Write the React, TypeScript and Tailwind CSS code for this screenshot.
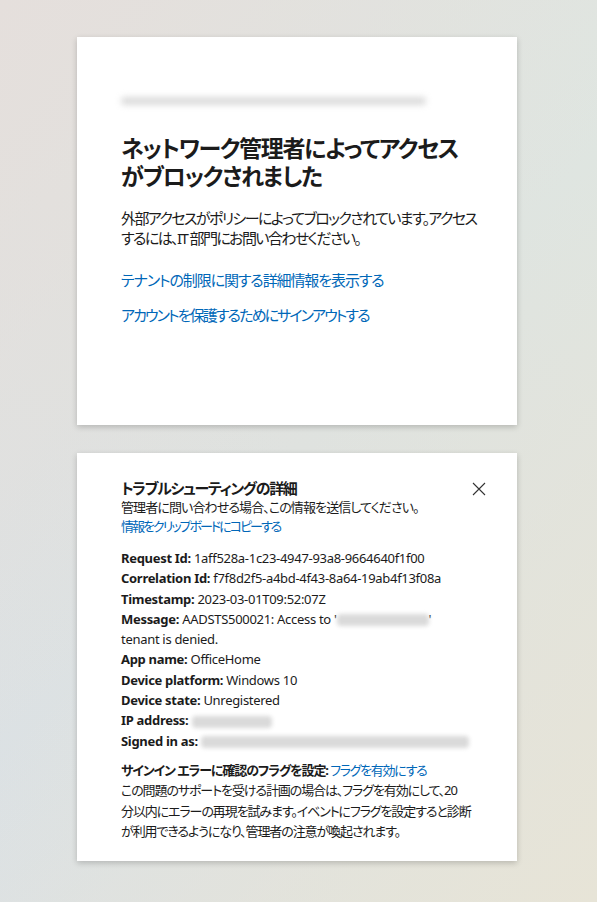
import React from 'react';

const font = "font-['Segoe_UI','Noto_Sans','Noto_Sans_CJK_JP',sans-serif] [font-feature-settings:'palt']";

const Row: React.FC<{ label: string; children?: React.ReactNode }> = ({ label, children }) => (
    <div className="leading-[20.3px] whitespace-nowrap tracking-[-0.3px]">
        <span className="font-bold">{label}</span> {children}
    </div>
);

const Blur: React.FC<{ w: string }> = ({ w }) => (
    <span className={`inline-block align-middle h-[12px] ${w} bg-[#dadada] blur-[2px] rounded-sm`} />
);

const App: React.FC = () => {
    return (
        <div
            className={`w-full min-h-[902px] ${font} text-[#1b1b1b] bg-[linear-gradient(135deg,#e5dfdc_0%,rgba(223,226,223,0)_50%,#e7e4d7_100%),linear-gradient(45deg,#dbe1e5_0%,#dfe2df_50%,#dfe6e1_100%)] pl-[77px] pt-[37px] flex flex-col gap-[28px]`}
        >
            {/* Blocked card */}
            <section className="w-[440px] h-[388px] bg-white shadow-[0_2px_6px_rgba(0,0,0,0.2)] px-[44px] pt-[45px] whitespace-nowrap">
                <div className="h-[37px] w-[320px] flex items-center">
                    <div className="h-[8px] w-[305px] bg-[#dbdbdb] blur-[3px] rounded-full" />
                </div>
                <h1 className="mt-[15px] text-[23px] leading-[28px] font-semibold tracking-[-1.3px]">
                    <span className="block">ネットワーク管理者によってアクセス</span>
                    <span className="block">がブロックされました</span>
                </h1>
                <p className="mt-[18px] text-[15px] leading-[20px] tracking-[-1.6px]">
                    <span className="block">外部アクセスがポリシーによってブロックされています。アクセス</span>
                    <span className="block">するには、IT 部門にお問い合わせください。</span>
                </p>
                <div className="mt-[22px] flex flex-col gap-[15px] text-[15px] leading-[20px] text-[#0067b8]">
                    <a href="#" className="tracking-[-1.1px]">テナントの制限に関する詳細情報を表示する</a>
                    <a href="#" className="tracking-[-1.9px]">アカウントを保護するためにサインアウトする</a>
                </div>
            </section>

            {/* Troubleshooting card */}
            <section className="relative w-[440px] h-[408px] bg-white shadow-[0_2px_6px_rgba(0,0,0,0.2)] px-[44px] pt-[25px] text-[13px] whitespace-nowrap">
                <button className="absolute left-[395px] top-[29px] w-[14px] h-[14px] text-[#333]">
                    <svg viewBox="0 0 14 14" className="w-[14px] h-[14px]" fill="none" stroke="currentColor" strokeWidth="1.1">
                        <path d="M1 1L13 13M13 1L1 13" />
                    </svg>
                </button>
                <h2 className="text-[15px] leading-[20px] font-bold tracking-[-1.3px]">トラブルシューティングの詳細</h2>
                <p className="leading-[19px] tracking-[-0.9px]">管理者に問い合わせる場合、この情報を送信してください。</p>
                <a href="#" className="block leading-[19px] text-[#0067b8] tracking-[-2px]">情報をクリップボードにコピーする</a>

                <div className="mt-[12px]">
                    <Row label="Request Id:">1aff528a-1c23-4947-93a8-9664640f1f00</Row>
                    <Row label="Correlation Id:">f7f8d2f5-a4bd-4f43-8a64-19ab4f13f08a</Row>
                    <Row label="Timestamp:">2023-03-01T09:52:07Z</Row>
                    <Row label="Message:">
                        AADSTS500021: Access to '<Blur w="w-[92px]" />'<br />tenant is denied.
                    </Row>
                    <Row label="App name:">OfficeHome</Row>
                    <Row label="Device platform:">Windows 10</Row>
                    <Row label="Device state:">Unregistered</Row>
                    <Row label="IP address:">
                        <Blur w="w-[80px]" />
                    </Row>
                    <Row label="Signed in as:">
                        <Blur w="w-[268px]" />
                    </Row>
                </div>

                <div className="mt-[9px] leading-[20.5px] tracking-[-1.1px]">
                    <div>
                        <span className="font-bold">サインイン エラーに確認のフラグを設定:</span>{' '}
                        <a href="#" className="text-[#0067b8] tracking-[-1.3px]">フラグを有効にする</a>
                    </div>
                    <p>
                        <span className="block">この問題のサポートを受ける計画の場合は、フラグを有効にして、20</span>
                        <span className="block">分以内にエラーの再現を試みます。イベントにフラグを設定すると診断</span>
                        <span className="block">が利用できるようになり、管理者の注意が喚起されます。</span>
                    </p>
                </div>
            </section>
        </div>
    );
};

export default App;
